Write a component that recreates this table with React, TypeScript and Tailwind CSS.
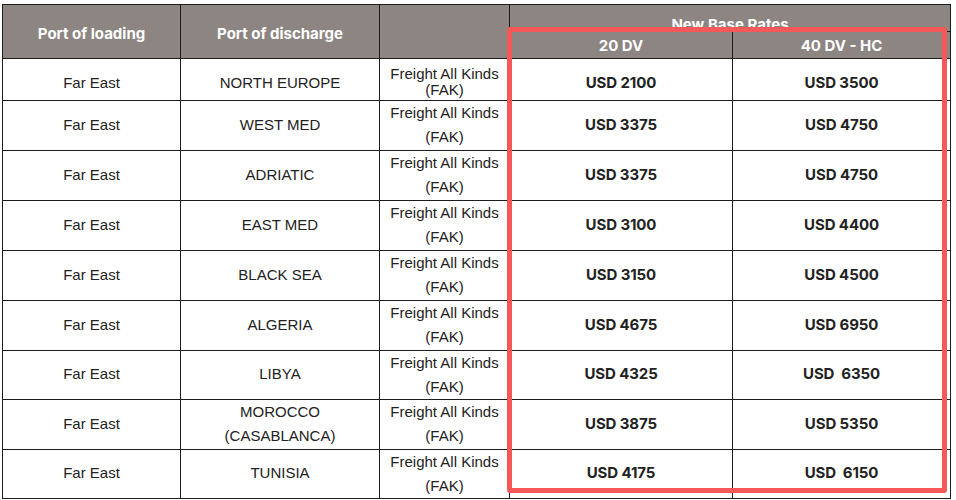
import React from 'react';

type Row = {
  from: string;
  to: React.ReactNode;
  dv20: string;
  hc40: string;
  h: string;
};

const ROWS: Row[] = [
  { from: 'Far East', to: 'NORTH EUROPE', dv20: 'USD 2100', hc40: 'USD 3500', h: 'h-[42px]' },
  { from: 'Far East', to: 'WEST MED', dv20: 'USD 3375', hc40: 'USD 4750', h: 'h-[50px]' },
  { from: 'Far East', to: 'ADRIATIC', dv20: 'USD 3375', hc40: 'USD 4750', h: 'h-[50px]' },
  { from: 'Far East', to: 'EAST MED', dv20: 'USD 3100', hc40: 'USD 4400', h: 'h-[50px]' },
  { from: 'Far East', to: 'BLACK SEA', dv20: 'USD 3150', hc40: 'USD 4500', h: 'h-[50px]' },
  { from: 'Far East', to: 'ALGERIA', dv20: 'USD 4675', hc40: 'USD 6950', h: 'h-[50px]' },
  { from: 'Far East', to: 'LIBYA', dv20: 'USD 4325', hc40: 'USD\u00a0 6350', h: 'h-[49px]' },
  {
    from: 'Far East',
    to: (
      <span className="leading-[24px]">
        MOROCCO
        <br />
        (CASABLANCA)
      </span>
    ),
    dv20: 'USD 3875',
    hc40: 'USD 5350',
    h: 'h-[50px]',
  },
  { from: 'Far East', to: 'TUNISIA', dv20: 'USD 4175', hc40: 'USD\u00a0 6150', h: 'h-[49px]' },
];

const cell = 'border border-[#1c1c1c] text-center align-middle p-0';
const head = "border border-[#1c1c1c] bg-[#8c8582] text-white font-bold text-[15px] font-['Inter',sans-serif] text-center p-0";
const rate = "font-bold font-['Inter',sans-serif] text-[15px] tracking-[-0.1px] whitespace-pre";

export default function App() {
  return (
    <div className="bg-white w-[956px] h-[500px] overflow-hidden pl-[2px] pt-[4px] font-['Liberation_Sans',Arial,sans-serif] text-[15px] text-[#222]">
      <div className="relative w-[948px]">
        <table className="w-[948px] table-fixed border-collapse">
          <colgroup>
            <col className="w-[178px]" />
            <col className="w-[199px]" />
            <col className="w-[130px]" />
            <col className="w-[223px]" />
            <col className="w-[218px]" />
          </colgroup>
          <thead>
            <tr className="h-[27px]">
              <th rowSpan={2} className={`${head} pt-[6px]`}>Port of loading</th>
              <th rowSpan={2} className={`${head} pt-[6px]`}>Port of discharge</th>
              <th rowSpan={2} className={head}></th>
              <th colSpan={2} className={`${head} leading-[16px]`}>
                <span className="relative top-[7px]">New Base Rates</span>
              </th>
            </tr>
            <tr className="h-[26px]">
              <th className={`${head} pt-[3px]`}>20 DV</th>
              <th className={`${head} pt-[3px]`}>40 DV - HC</th>
            </tr>
          </thead>
          <tbody>
            {ROWS.map((r, i) => {
              const first = i === 0;
              return (
                <tr key={i} className={r.h}>
                  <td className={`${cell} ${first ? 'pt-[9px]' : ''}`}>{r.from}</td>
                  <td className={`${cell} ${first ? 'pt-[9px]' : ''}`}>{r.to}</td>
                  <td className={`${cell} ${first ? 'pt-[5px] leading-[16px]' : 'align-top leading-[24px]'}`}>
                    Freight All Kinds
                    <br />
                    (FAK)
                  </td>
                  <td className={`${cell} ${rate} ${first ? 'pt-[9px]' : ''}`}>{r.dv20}</td>
                  <td className={`${cell} ${rate} ${first ? 'pt-[9px]' : ''}`}>{r.hc40}</td>
                </tr>
              );
            })}
          </tbody>
        </table>
        {/* highlight box over the rate columns */}
        <div className="absolute left-[505px] top-[23px] w-[440px] h-[466px] border-[5px] border-[#f55858] rounded-[3px] pointer-events-none" />
      </div>
    </div>
  );
}
